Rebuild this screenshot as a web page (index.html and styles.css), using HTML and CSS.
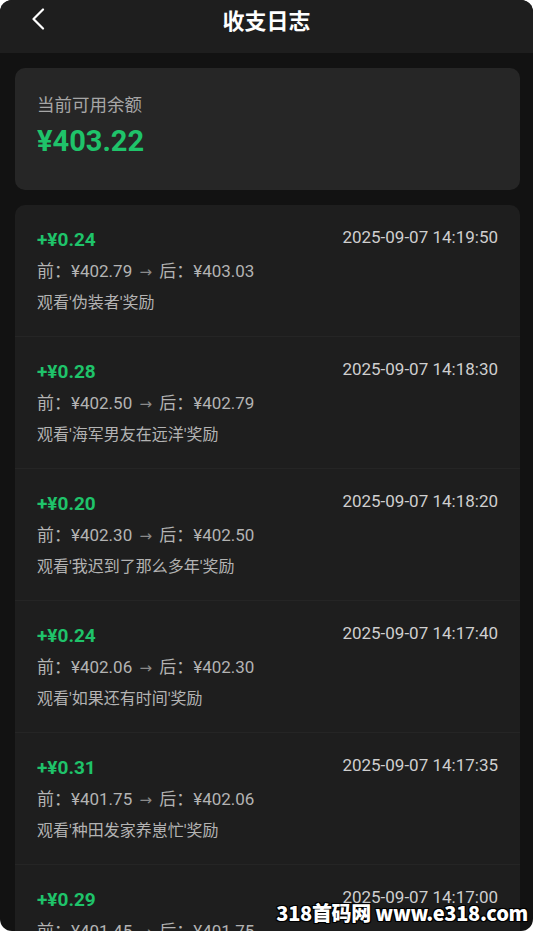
FILE: index.html
```html
<!DOCTYPE html>
<html lang="zh-CN">
<head>
<meta charset="utf-8">
<title>收支日志</title>
<link rel="stylesheet" href="styles.css">
</head>
<body>
<div class="phone">
  <header class="topbar">
    <span class="back">
      <svg width="16" height="22" viewBox="0 0 16 22"><path d="M13 1.5 L3.5 11 L13 20.5" fill="none" stroke="#ffffff" stroke-width="2.2" stroke-linecap="round" stroke-linejoin="round"/></svg>
    </span>
    <h1 class="title">收支日志</h1>
  </header>
  <main class="content">
    <section class="balance">
      <div class="balance-label">当前可用余额</div>
      <div class="balance-amount">¥403.22</div>
    </section>
    <section class="list">
      <div class="item">
        <div class="row1"><span class="amt">+¥0.24</span><span class="date">2025-09-07 14:19:50</span></div>
        <div class="change">前：¥402.79 <span class="arrow">→</span> 后：¥403.03</div>
        <div class="desc">观看'伪装者'奖励</div>
      </div>
      <div class="item">
        <div class="row1"><span class="amt">+¥0.28</span><span class="date">2025-09-07 14:18:30</span></div>
        <div class="change">前：¥402.50 <span class="arrow">→</span> 后：¥402.79</div>
        <div class="desc">观看'海军男友在远洋'奖励</div>
      </div>
      <div class="item">
        <div class="row1"><span class="amt">+¥0.20</span><span class="date">2025-09-07 14:18:20</span></div>
        <div class="change">前：¥402.30 <span class="arrow">→</span> 后：¥402.50</div>
        <div class="desc">观看'我迟到了那么多年'奖励</div>
      </div>
      <div class="item">
        <div class="row1"><span class="amt">+¥0.24</span><span class="date">2025-09-07 14:17:40</span></div>
        <div class="change">前：¥402.06 <span class="arrow">→</span> 后：¥402.30</div>
        <div class="desc">观看'如果还有时间'奖励</div>
      </div>
      <div class="item">
        <div class="row1"><span class="amt">+¥0.31</span><span class="date">2025-09-07 14:17:35</span></div>
        <div class="change">前：¥401.75 <span class="arrow">→</span> 后：¥402.06</div>
        <div class="desc">观看'种田发家养崽忙'奖励</div>
      </div>
      <div class="item">
        <div class="row1"><span class="amt">+¥0.29</span><span class="date">2025-09-07 14:17:00</span></div>
        <div class="change">前：¥401.45 <span class="arrow">→</span> 后：¥401.75</div>
        <div class="desc">观看'奖励'</div>
      </div>
    </section>
  </main>
  <div class="watermark">318首码网 www.e318.com</div>
</div>
</body>
</html>
```

FILE: styles.css
```css
* { box-sizing: border-box; }
html, body { margin: 0; padding: 0; background: #ffffff; }
body {
  font-family: Roboto, "Noto Sans CJK SC", sans-serif;
}
.phone {
  position: relative;
  width: 533px;
  height: 931px;
  border-radius: 12px;
  overflow: hidden;
  background: #121212;
}
.topbar {
  height: 53px;
  background: #1e1e1e;
  display: flex;
  align-items: center;
  justify-content: center;
  position: relative;
}
.back {
  position: absolute;
  left: 30px;
  top: 8px;
  display: flex;
}
.title {
  margin: 0 0 15px 0;
  font-size: 22px;
  font-weight: 700;
  color: #ffffff;
  font-family: "Noto Sans CJK SC", sans-serif;
  line-height: 30px;
}
.content {
  padding: 15px 13px 0 15px;
  display: flex;
  flex-direction: column;
  gap: 15px;
}
.balance {
  background: #262626;
  border-radius: 10px;
  padding: 23px 22px 30px;
  height: 122px;
}
.balance-label {
  font-size: 17.5px;
  line-height: 26px;
  color: #a6a6a6;
  font-family: "Noto Sans CJK SC", sans-serif;
}
.balance-amount {
  margin-top: 6px;
  font-size: 29px;
  line-height: 36px;
  font-weight: 700;
  color: #1fc36a;
}
.list {
  background: #1e1e1e;
  border-radius: 10px;
}
.item {
  padding: 22px 22px 24px;
  height: 132px;
  border-bottom: 1px solid #252525;
}
.row1 {
  display: flex;
  justify-content: space-between;
  align-items: center;
  height: 24px;
}
.amt {
  font-size: 19px;
  font-weight: 700;
  color: #1fc36a;
}
.date {
  font-size: 17px;
  color: #cfcfcf;
  position: relative;
  top: -2px;
}
.change {
  margin-top: 8px;
  font-size: 17px;
  line-height: 24px;
  color: #b3b3b3;
}
.arrow {
  color: #8a8a8a;
  font-family: "DejaVu Sans", sans-serif;
  font-size: 15px;
  margin: 0 3px;
}
.desc {
  margin-top: 7px;
  font-size: 16px;
  line-height: 24px;
  color: #b3b3b3;
}
.watermark {
  position: absolute;
  right: 5px;
  bottom: 5px;
  font-size: 20px;
  font-weight: 900;
  color: #ffffff;
  font-family: "Noto Sans CJK SC", sans-serif;
  -webkit-text-stroke: 1.5px #000000;
  paint-order: stroke fill;
  text-shadow: 0 0 2px #000, 1px 1px 0 #000, -1px -1px 0 #000, 1px -1px 0 #000, -1px 1px 0 #000;
  letter-spacing: -0.3px;
  line-height: 26px;
}
```
